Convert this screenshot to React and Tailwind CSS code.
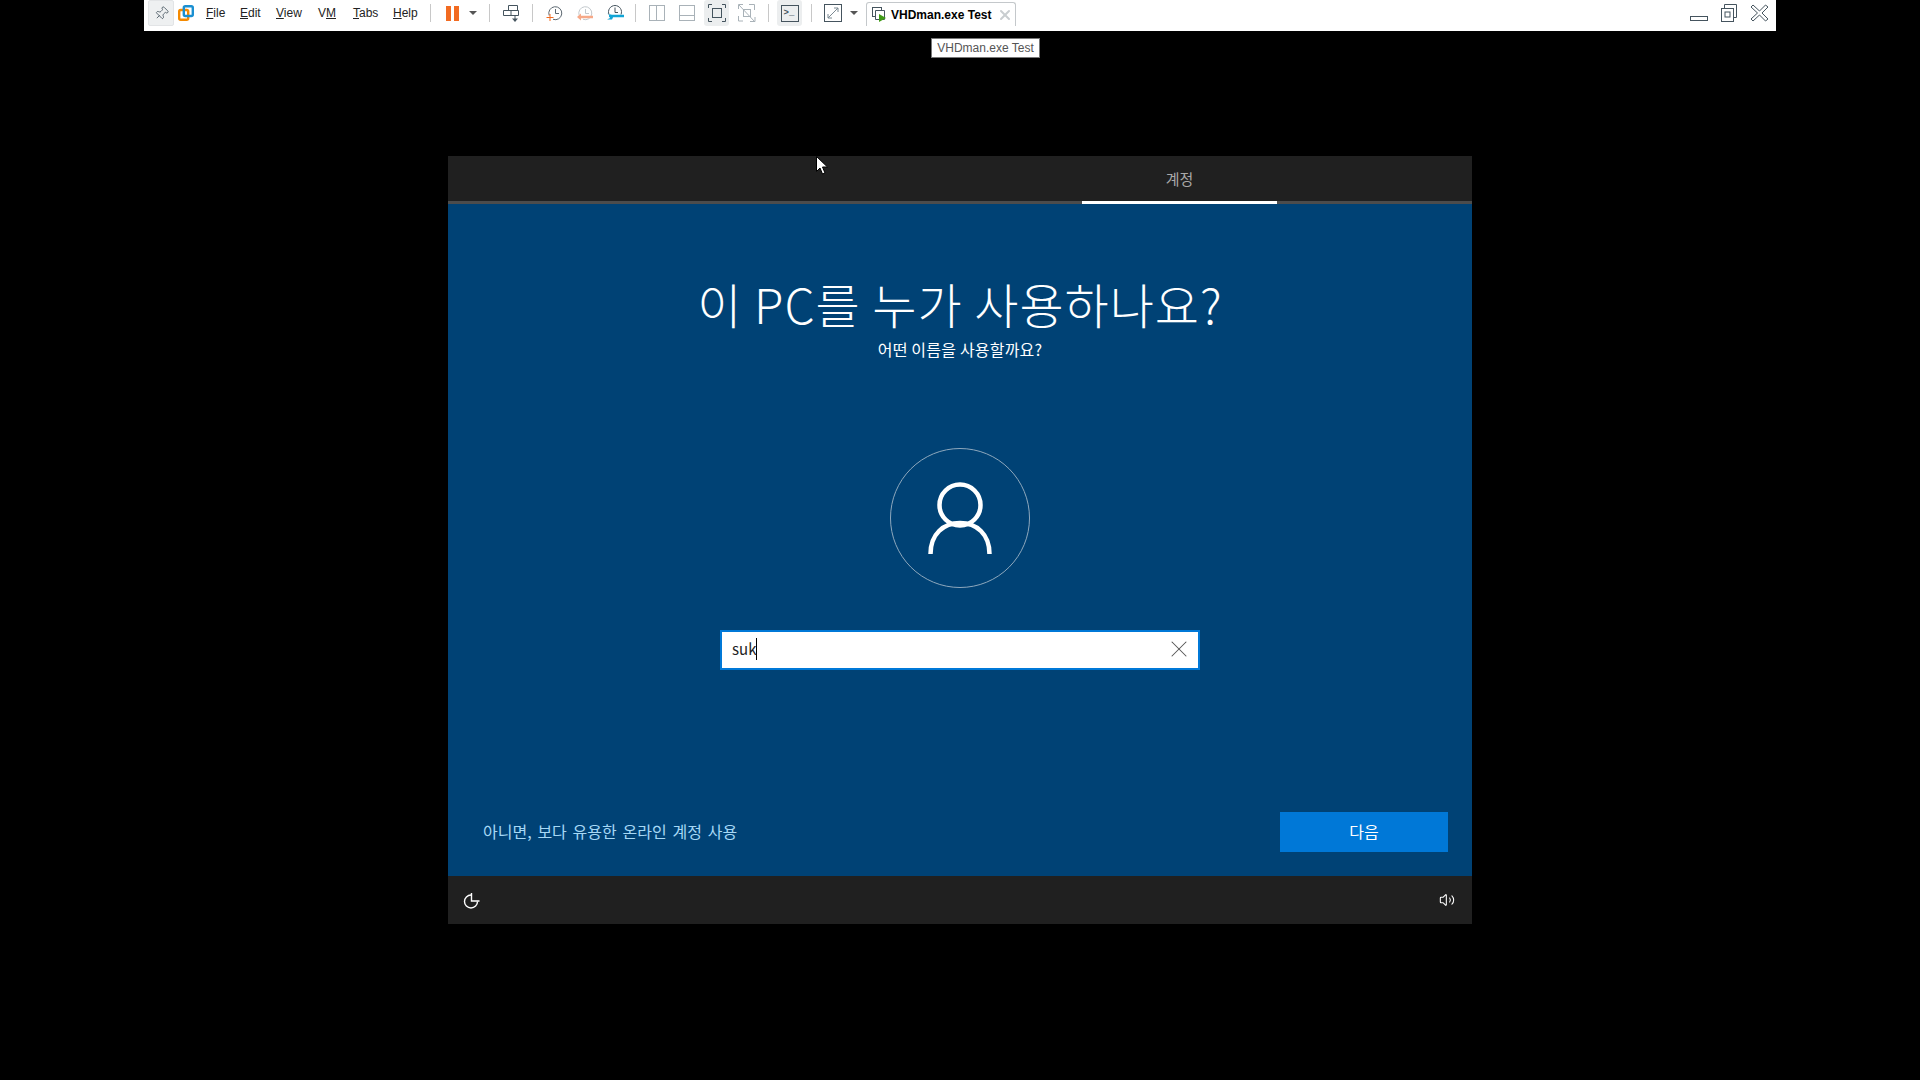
import React from 'react';
import { X, Volume2, Pin } from 'lucide-react';

const menus = [
  { label: 'File', key: 'F', rest: 'ile', w: 'w-[34px]' },
  { label: 'Edit', key: 'E', rest: 'dit', w: 'w-[36px]' },
  { label: 'View', key: 'V', rest: 'iew', w: 'w-[42px]' },
  { label: 'VM', key: 'M', rest: '', w: 'w-[35px]' },
  { label: 'Tabs', key: 'T', rest: 'abs', w: 'w-[40px]' },
  { label: 'Help', key: 'H', rest: 'elp', w: 'w-[37px]' },
];

function Sep({ className = '' }) {
  return <span className={`w-px h-[18px] bg-[#c8c8c8] shrink-0 ${className}`} />;
}

function Caret({ className = '' }) {
  return <span className={`block w-0 h-0 border-x-[4px] border-x-transparent border-t-[4px] border-t-[#555] shrink-0 ${className}`} />;
}

function Clock({ className = '', faded, children }) {
  const c = faded ? '#c3c9cd' : '#5b6770';
  return (
    <svg className={className} width="18" height="18" viewBox="0 0 18 18" fill="none" stroke={c} strokeWidth="1">
      <path d="M3.200 11.500a6.500 6.500 0 1 1 3.800 3.800" />
      <path d="M9.500 5v4.500h3.500" />
      {children}
    </svg>
  );
}

function Toolbar() {
  return (
    <div className="ml-[144px] w-[1632px] h-[31px] bg-white flex items-start text-[12px] text-[#222]">
      <div className="ml-[4px] w-[26px] h-[26px] bg-[#eef0f1] rounded-[2px] border border-[#e2e4e6] flex items-center justify-center">
        <Pin size={15} strokeWidth={1.3} color="#45545e" className="rotate-45" />
      </div>
      {/* product logo: two overlapping squares */}
      <svg className="ml-[4px] mt-[5px]" width="16" height="16" viewBox="0 0 16 16" fill="none">
        <rect x="1.200" y="5" width="9" height="9.800" rx="1.500" stroke="#f58a00" strokeWidth="2.400" />
        <rect x="5.800" y="1.200" width="9" height="9.800" rx="1.500" stroke="#1a8fd1" strokeWidth="2.400" />
      </svg>
      <div className="ml-[12px] flex h-[26px] items-center font-['Liberation_Sans',sans-serif]">
        {menus.map((m) =>
          m.label === 'VM' ? (
            <span key={m.label} className={m.w}>
              V<u>M</u>
            </span>
          ) : (
            <span key={m.label} className={m.w}>
              <u>{m.key}</u>
              {m.rest}
            </span>
          )
        )}
      </div>
      <div className="h-[26px] flex items-center">
        <Sep />
        <span className="ml-[15px] w-[5px] h-[15px] bg-[#f26b21]" />
        <span className="ml-[3px] w-[5px] h-[15px] bg-[#f26b21]" />
        <Caret className="ml-[10px]" />
        <Sep className="ml-[12px]" />
        {/* send keys */}
        <svg className="ml-[13px]" width="18" height="20" viewBox="0 0 18 20" fill="none" stroke="#45545e">
          <path d="M5.500 2.500h9v5h-9zM.5 7.500h15v5H.5zM8 7.500v5" />
          <path d="M12 13v3" />
          <path d="M9 15.500l3 3.500 3-3.500z" fill="#45545e" stroke="none" />
        </svg>
        <Sep className="ml-[11px]" />
        <Clock className="ml-[13px]">
          <path d="M.5 13.500h7M4 10v7" stroke="#f26b21" />
        </Clock>
        <Clock className="ml-[12px]" faded>
          <path d="M4 13h13" stroke="#f7a988" strokeWidth="2.500" />
          <path d="M5 9.500L1 13l4 3.500z" fill="#f7a988" stroke="none" />
        </Clock>
        <svg className="ml-[12px]" width="18" height="18" viewBox="0 0 18 18" fill="none">
          <path d="M3 10.500a6.500 6.500 0 1 1 12 0" stroke="#45545e" />
          <path d="M9 3.500v5h3" stroke="#45545e" />
          <path d="M3 12h15" stroke="#12a5d6" strokeWidth="2.500" />
          <path d="M1 9.500l3 1.500v3l-3 1.500 5 0 1-2-1-2.500z" fill="#12a5d6" />
        </svg>
        <Sep className="ml-[11px]" />
        <span className="ml-[13px] w-[16px] h-[16px] border border-[#a9b2b8] flex">
          <span className="w-[7px] border-r border-[#a9b2b8]" />
        </span>
        <span className="ml-[14px] w-[16px] h-[16px] border border-[#a9b2b8] flex items-end">
          <span className="w-full h-[5px] border-t border-[#a9b2b8]" />
        </span>
        <span className="ml-[9px] w-[25px] h-[26px] bg-[#eceeef] rounded-[3px] flex items-center justify-center">
          <svg width="18" height="18" viewBox="0 0 18 18" fill="none" stroke="#45545e">
            <path d="M.5 4V.5H4M14 .5h3.500V4M17.500 14v3.500H14M4 17.500H.5V14" />
            <rect x="4.500" y="4.500" width="9" height="9" />
          </svg>
        </span>
        <svg className="ml-[9px]" width="18" height="18" viewBox="0 0 18 18" fill="none" stroke="#a9b2b8">
          <path d="M.5 5V.5H5M11 .5h5.500V6M17 13v4.500h-5M5 17H.5v-5" />
          <rect x="5.500" y="5.500" width="7" height="7" />
          <path d="M1 1l16 17" />
        </svg>
        <Sep className="ml-[12px]" />
        <span className="ml-[8px] w-[25px] h-[26px] bg-[#eceeef] rounded-[3px] flex items-center justify-center">
          <span className="w-[18px] h-[17px] border border-[#45545e] flex items-center pl-[2px] text-[9px] leading-none font-bold text-[#45545e] font-['Liberation_Mono',monospace]">
            &gt;_
          </span>
        </span>
        <Sep className="ml-[9px]" />
        <svg className="ml-[12px]" width="18" height="18" viewBox="0 0 18 18" fill="none" stroke="#45545e">
          <rect x=".5" y=".5" width="17" height="17" />
          <path d="M4 14l10-10M4 10v4h4M10 4h4v4" stroke="#7b8992" />
        </svg>
        <Caret className="ml-[8px]" />
      </div>
      {/* open VM tab */}
      <div className="ml-[8px] mt-[2px] w-[150px] h-[24px] border border-b-0 border-[#c4c8cb] rounded-t-[3px] flex items-center pl-[5px] font-['Liberation_Sans',sans-serif] font-bold text-[12px] text-black">
        <svg width="15" height="16" viewBox="0 0 15 16" fill="none" stroke="#45545e">
          <rect x=".5" y=".5" width="9" height="9" />
          <path d="M3.500 3.500h9v9h-9z" fill="#fff" />
          <path d="M7 7l7 4-7 4z" fill="#3f9b17" stroke="none" />
        </svg>
        <span className="ml-[4px]">VHDman.exe Test</span>
        <X size={16} strokeWidth={3} color="#c9cdd0" className="ml-[6px]" />
      </div>
      <div className="ml-auto h-[31px] flex items-start">
        <span className="mt-[16px] w-[18px] h-[5px] border border-[#45545e]" />
        <svg className="ml-[13px] mt-[4px]" width="16" height="18" viewBox="0 0 16 18" fill="none" stroke="#45545e">
          <path d="M3.500 4.500V.5h12v13h-3" />
          <rect x=".5" y="4.500" width="12" height="13" />
          <rect x="4" y="8" width="5" height="5" />
        </svg>
        <svg className="ml-[13px] mt-[4px] mr-[7px]" width="19" height="18" viewBox="0 0 19 18" fill="none" stroke="#45545e">
          <path d="M1 3l2-2 6.500 6 6-6 2.500 2-6 6 6 6-2.500 2-6-6-6.500 6-2-2 6.500-6z" />
        </svg>
      </div>
    </div>
  );
}

function Oobe() {
  return (
    <div className="mt-[125px] ml-[448px] w-[1024px] h-[768px] flex flex-col bg-[#004275] text-white font-['Noto_Sans_CJK_KR','Noto_Sans',sans-serif]">
      <div className="h-[48px] bg-[#202020] border-b-[3px] border-[#4c4c4c] flex justify-end pr-[195px] shrink-0">
        <div className="relative w-[195px] h-[45px] flex items-center justify-center pt-[1px] text-[15px] text-[#a8a8a8]">
          계정
          <span className="absolute left-0 right-0 bottom-[-3px] h-[3px] bg-white" />
        </div>
      </div>
      <div className="flex-1 flex flex-col items-center">
        <h1 className="mt-[66px] h-[66px] text-[48px] leading-[66px] font-light whitespace-nowrap tracking-[1px]">이 PC를 누가 사용하나요?</h1>
        <p className="mt-[1px] h-[24px] text-[16px] leading-[24px] tracking-[0.2px]">어떤 이름을 사용할까요?</p>
        <div className="mt-[87px] w-[140px] h-[140px] rounded-full border border-[#8ea8bd] flex items-center justify-center">
          <svg width="64" height="72" viewBox="0 0 64 72" fill="none" stroke="#fff" strokeWidth="4.500">
            <circle cx="32" cy="23" r="20.500" />
            <path d="M2.500 72c0-20 13-31 29.500-31s29.500 11 29.500 31" />
          </svg>
        </div>
        <div className="mt-[42px] w-[480px] h-[40px] bg-white border-2 border-[#0078d7] flex items-center pl-[10px] pr-[5px] text-[15px] text-[#222]">
          <span className="mb-[2px] border-r border-black leading-[22px]">suk</span>
          <X size={28} strokeWidth={0.9} color="#555" className="ml-auto mb-[2px]" />
        </div>
        <div className="mt-auto mb-[24px] w-full flex items-center justify-between pl-[35px] pr-[24px]">
          <span className="pb-[2px] text-[16px] text-[#a6d8f5] [word-spacing:2.200px]">아니면, 보다 유용한 온라인 계정 사용</span>
          <button className="w-[168px] h-[40px] pb-[2px] bg-[#0078d7] text-[16px] text-white">다음</button>
        </div>
      </div>
      <div className="h-[48px] bg-[#202020] flex items-center justify-between pl-[15px] pr-[17px] shrink-0">
        <svg width="17" height="17" viewBox="0 0 17 17" fill="none" stroke="#fff" strokeWidth="1.400">
          <path d="M8 3a6.500 6.500 0 1 0 6.500 6.500" />
          <path d="M8.500 1v8h8" />
        </svg>
        <Volume2 size={16} strokeWidth={1.6} />
      </div>
    </div>
  );
}

export default function App() {
  return (
    <div className="relative w-[1920px] h-[1080px] bg-black overflow-hidden">
      <Toolbar />
      <Oobe />
      {/* tooltip over the open tab */}
      <div className="absolute left-[931px] top-[38px] w-[109px] h-[20px] bg-white border border-[#777] flex items-center justify-center text-[12px] text-[#555] font-['Liberation_Sans',sans-serif]">
        VHDman.exe Test
      </div>
      {/* mouse pointer */}
      <svg className="absolute left-[816px] top-[156px]" width="12" height="20" viewBox="0 0 12 20">
        <path d="M.5.5v15l3.500-3.500 2.500 6 2.500-1-2.500-6h5z" fill="#fff" stroke="#000" />
      </svg>
    </div>
  );
}
